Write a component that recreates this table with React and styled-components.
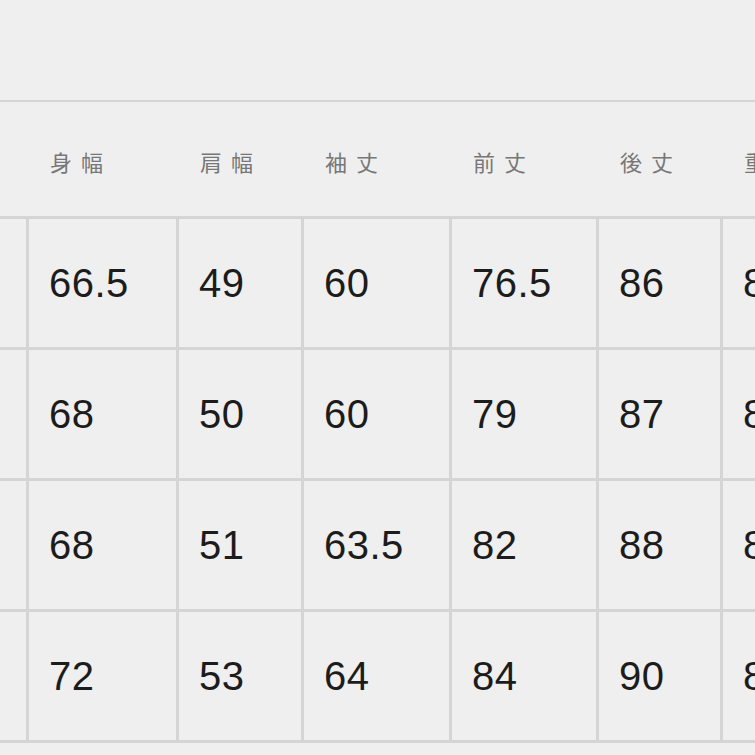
import React from "react";
import styled, { createGlobalStyle } from "styled-components";

const GlobalStyle = createGlobalStyle`
    html, body {
        margin: 0;
        padding: 0;
        background: #efefef;
    }
    body {
        width: 755px;
        height: 755px;
        overflow: hidden;
    }
`;

const LINE = "#d5d5d5";
const COLUMNS = "26px 147px 122px 145px 144px 121px 120px";

const Page = styled.div`
    width: 755px;
    height: 755px;
    overflow: hidden;
    background: #efefef;
    padding-top: 100px;
    box-sizing: border-box;
`;

const Chart = styled.div`
    width: 900px;
    border-top: 2px solid ${LINE};
`;

const HeaderRow = styled.div`
    display: grid;
    grid-template-columns: ${COLUMNS};
    column-gap: 3px;
    height: 114px;
    align-items: center;
    padding-top: 4px;
    box-sizing: border-box;
`;

const HeaderCell = styled.div`
    padding-left: 21px;
    font-family: "Noto Sans CJK JP", "Noto Sans", sans-serif;
    font-size: 22px;
    letter-spacing: 9px;
    color: #777777;
    white-space: nowrap;
`;

const Body = styled.div`
    display: grid;
    grid-template-columns: ${COLUMNS};
    grid-auto-rows: 128px;
    gap: 3px;
    background: ${LINE};
    padding: 3px 0;
`;

const Cell = styled.div`
    background: #efefef;
    display: flex;
    align-items: center;
    padding-left: 20px;
    font-family: "Liberation Sans", Arial, sans-serif;
    font-size: 40px;
    letter-spacing: 0.5px;
    color: #1c1c1c;
    white-space: nowrap;
`;

const headers = ["", "身幅", "肩幅", "袖丈", "前丈", "後丈", "重量"];

const rows = [
    ["S", "66.5", "49", "60", "76.5", "86", "83"],
    ["M", "68", "50", "60", "79", "87", "85"],
    ["L", "68", "51", "63.5", "82", "88", "87"],
    ["XL", "72", "53", "64", "84", "90", "89"],
];

const App = () => {
    return (
        <>
            <GlobalStyle />
            <Page>
                <Chart>
                    <HeaderRow>
                        {headers.map((h, i) => (
                            <HeaderCell key={i}>{h}</HeaderCell>
                        ))}
                    </HeaderRow>
                    <Body>
                        {rows.map((row, r) =>
                            row.map((value, c) => (
                                <Cell key={`${r}-${c}`}>{c === 0 ? "" : value}</Cell>
                            ))
                        )}
                    </Body>
                </Chart>
            </Page>
        </>
    );
};

export default App;
